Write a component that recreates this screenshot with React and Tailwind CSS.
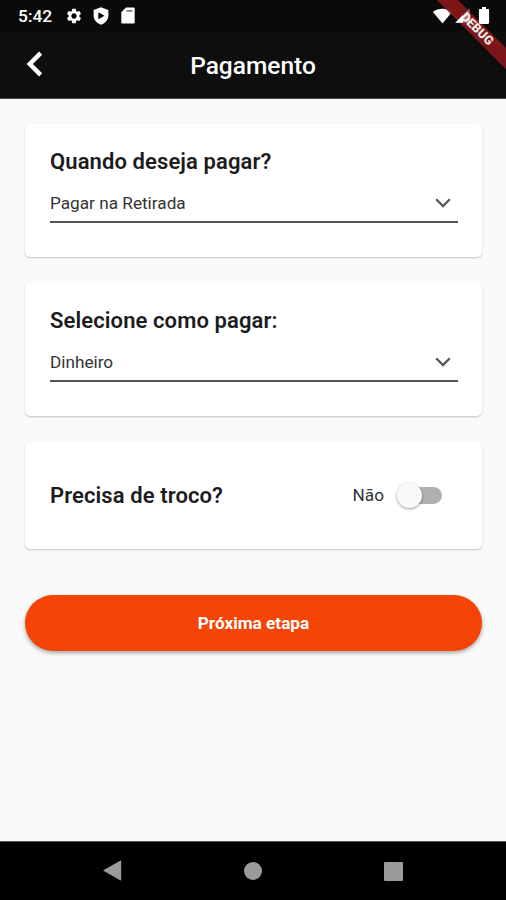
import React, { useState } from 'react';
import { MdSettings } from 'react-icons/md';

function StatusBar() {
  return (
    <div className="flex h-[31px] shrink-0 items-center bg-[#0a0a0a] pl-[18px] pr-[16px] text-white">
      <span className="w-[47px] pt-px text-[17.4px] leading-[31px] font-medium">5:42</span>
      <MdSettings size={18} />
      <svg className="ml-[10px]" width="16" height="18" viewBox="0 0 16 18">
        <path fill="currentColor" fillRule="evenodd" d="M8 0.3 15.4 3v5.6c0 4.2-3 7.6-7.4 9.1C3.6 16.2.6 12.8.6 8.6V3zM5.3 5.2v7l6.2-3.5z" />
      </svg>
      <svg className="ml-[12px]" width="14" height="17" viewBox="0 0 14 17">
        <path fill="currentColor" d="M5 .5h7.4c.8 0 1.3.6 1.3 1.3v13.4c0 .8-.6 1.3-1.3 1.3H1.6c-.8 0-1.3-.6-1.3-1.3V5.2z" />
        <path stroke="#0a0a0a" strokeWidth="1.3" opacity="0.7" d="M5.5 3.9h6" />
      </svg>
      <svg className="ml-auto" width="20" height="16" viewBox="0 0 20 16">
        <path fill="currentColor" d="M10.5 15.6.9 3.9C3.6 1.8 6.9.8 10.5.8s6.7 1 9.4 3.1z" />
      </svg>
      {/* signal sits over the debug banner */}
      <svg className="relative z-10 ml-[3px]" width="15" height="15" viewBox="0 0 15 15">
        <path fill="currentColor" opacity="0.4" d="M.3 14.7 14.7.3v14.4z" />
        <path fill="currentColor" d="M.3 14.700 8 7v7.700z" />
      </svg>
      <svg className="relative z-10 ml-[8px]" width="12" height="17" viewBox="0 0 12 17">
        <path fill="currentColor" d="M4 0h4v2h2c.6 0 1.1.5 1.1 1.1v12.6c0 .7-.5 1.2-1.1 1.2H2c-.6 0-1.100-.5-1.100-1.200V3.100C.9 2.500 1.400 2 2 2h2z" />
      </svg>
    </div>
  );
}

function AppBar({ title }) {
  return (
    <header className="grid h-[68px] shrink-0 grid-cols-[60px_1fr_60px] items-center border-b border-[#4a4a4a] bg-[#0e0e0e] text-white">
      <button type="button" aria-label="Voltar" className="ml-[26px] -mt-[2px] w-[18px]">
        <svg width="18" height="26" viewBox="0 0 18 26" fill="none">
          <path stroke="currentColor" strokeWidth="4.5" d="M14.600 2.200 3.800 13l10.800 10.800" />
        </svg>
      </button>
      <h1 className="pt-[2px] text-center text-[24.5px] font-medium leading-[66px]">{title}</h1>
    </header>
  );
}

function Card({ className, children }) {
  return (
    <section className={`rounded-[5px] bg-white px-[25px] shadow-[0_1px_2px_rgba(0,0,0,0.22)] ${className}`}>
      {children}
    </section>
  );
}

function SelectCard({ title, value }) {
  return (
    <Card className="h-[133px] pt-[24px]">
      <h2 className="text-[22px] font-semibold leading-[28px] tracking-[0.1px]">{title}</h2>
      <button type="button" className="mt-[8px] flex h-[39px] w-[408px] items-center justify-between border-b-2 border-[#575557] pr-[7px] pt-[3px] text-left">
        <span className="text-[17.2px] text-[#333]">{value}</span>
        <svg className="-mt-[3px]" width="16" height="10" viewBox="0 0 16 10" fill="none">
          <path stroke="#555" strokeWidth="2.2" d="m1.200 1.300 6.800 6.800 6.800-6.800" />
        </svg>
      </button>
    </Card>
  );
}

function Switch({ checked, onChange }) {
  return (
    <button type="button" role="switch" aria-checked={checked} onClick={onChange} className="flex h-[25px] w-[45px] items-center">
      <span className="flex h-[17px] w-full items-center rounded-full bg-[#b0b0b0]">
        <span className={`size-[25px] shrink-0 rounded-full bg-[#fafafa] shadow-[0_1px_3px_rgba(0,0,0,0.4)] ${checked ? 'ml-auto' : ''}`} />
      </span>
    </button>
  );
}

function DebugBanner() {
  return (
    <div className="pointer-events-none absolute right-0 top-0 size-[70px] overflow-hidden">
      <div className="absolute -left-[18px] top-[22.7px] flex h-[14.5px] w-[120px] rotate-45 items-center justify-center bg-[#8a1719]/90">
        <span className="-ml-[3px] text-[12.5px] font-black leading-none text-white/90">DEBUG</span>
      </div>
    </div>
  );
}

function NavBar() {
  return (
    <nav className="flex h-[59px] shrink-0 items-center justify-between border-t border-[#555] bg-black pl-[102px] pr-[103px] text-[#9b9b9b]">
      <svg width="20" height="22" viewBox="0 0 20 22">
        <path fill="currentColor" d="M1.400 10.300 18.500.5c.4-.2.7 0 .7.400v19.200c0 .4-.3.6-.7.400L1.400 10.700z" />
      </svg>
      <span className="size-[18px] rounded-full bg-current" />
      <span className="size-[19px] rounded-[1px] bg-current" />
    </nav>
  );
}

export default function App() {
  const [needsChange, setNeedsChange] = useState(false);

  return (
    <div className="relative flex h-[900px] w-[506px] flex-col overflow-hidden bg-[#fafafa] font-[Roboto,sans-serif] text-[#1c1c1c]">
      <StatusBar />
      <AppBar title="Pagamento" />

      <main className="flex flex-1 flex-col gap-[26px] pl-[25px] pr-[24px] pt-[25px]">
        <SelectCard title="Quando deseja pagar?" value="Pagar na Retirada" />
        <SelectCard title="Selecione como pagar:" value="Dinheiro" />

        <Card className="flex h-[107px] items-center">
          <h2 className="text-[22px] font-semibold tracking-[0.1px]">Precisa de troco?</h2>
          <div className="ml-auto mr-[15px] flex items-center gap-[13px]">
            <span className="pt-px text-[17.2px] text-[#333]">{needsChange ? 'Sim' : 'Não'}</span>
            <Switch checked={needsChange} onChange={() => setNeedsChange(!needsChange)} />
          </div>
        </Card>

        <button type="button" className="mt-[20px] h-[56px] rounded-full bg-[#f44406] pt-[2px] text-[17.2px] font-bold text-white shadow-[0_2px_4px_rgba(0,0,0,0.35)]">
          Próxima etapa
        </button>
      </main>

      <NavBar />
      <DebugBanner />
    </div>
  );
}
